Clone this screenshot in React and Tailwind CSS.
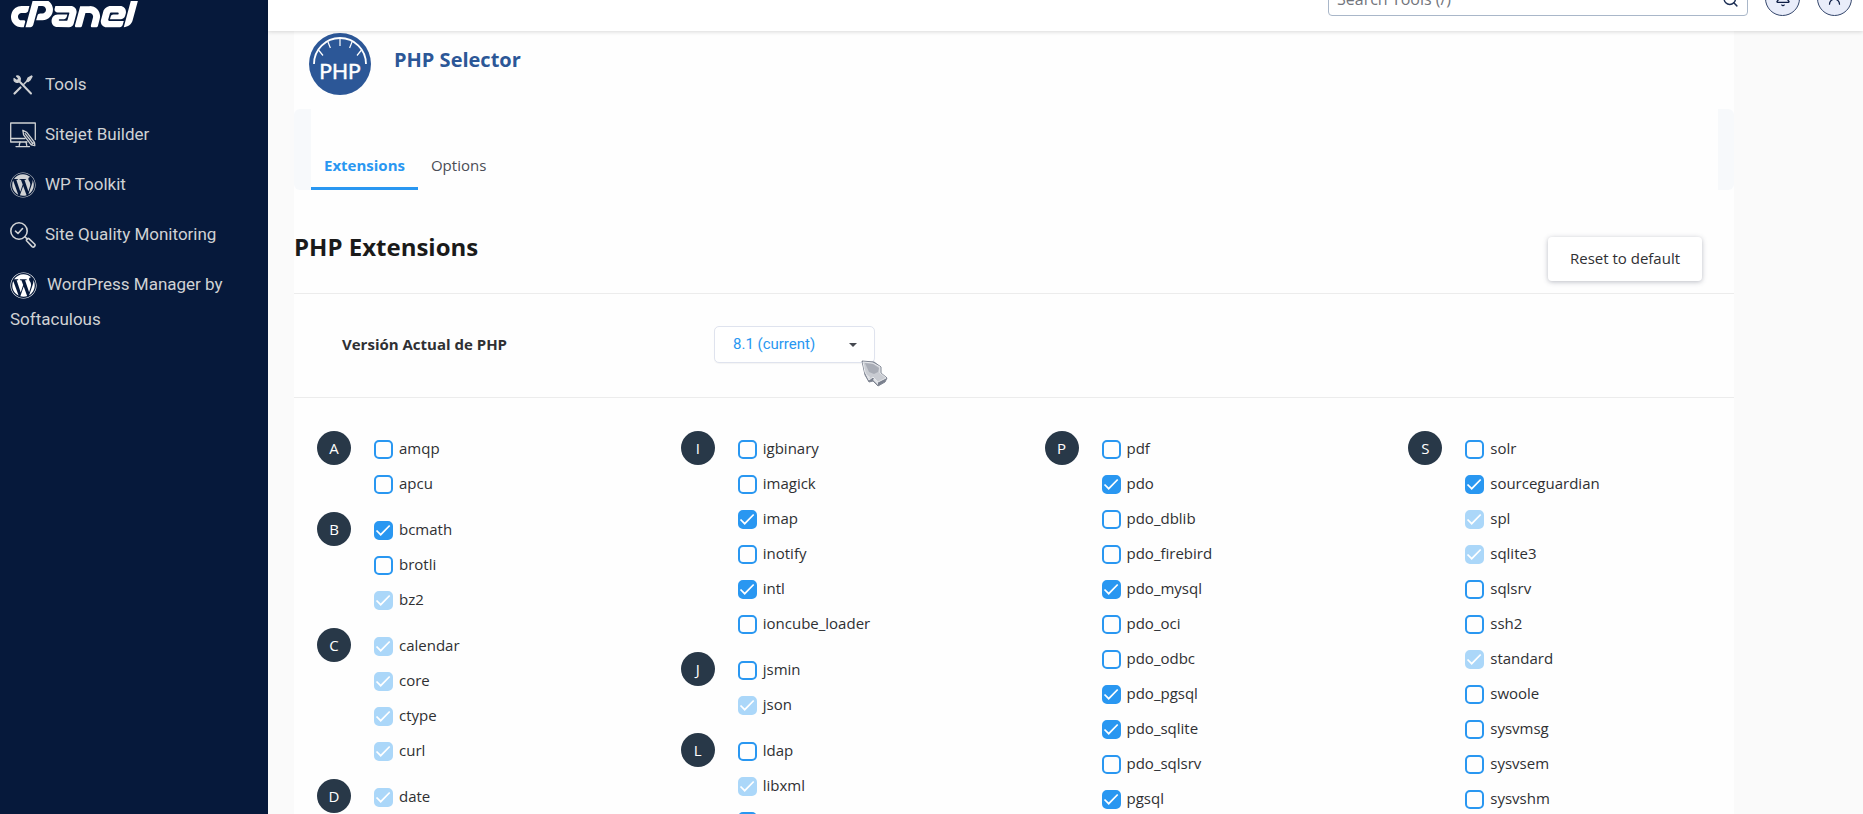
import { useState } from 'react';
import { FaCpanel, FaWordpress } from 'react-icons/fa';
import { Bell, Search, UserRound } from 'lucide-react';

// [name, state] - state is 'off', 'on' or 'locked' (built in, can't be turned off)
const COLUMNS = [
    [
        { letter: 'A', items: [['amqp', 'off'], ['apcu', 'off']] },
        { letter: 'B', items: [['bcmath', 'on'], ['brotli', 'off'], ['bz2', 'locked']] },
        { letter: 'C', items: [['calendar', 'locked'], ['core', 'locked'], ['ctype', 'locked'], ['curl', 'locked']] },
        { letter: 'D', items: [['date', 'locked']] },
    ],
    [
        { letter: 'I', items: [['igbinary', 'off'], ['imagick', 'off'], ['imap', 'on'], ['inotify', 'off'], ['intl', 'on'], ['ioncube_loader', 'off']] },
        { letter: 'J', items: [['jsmin', 'off'], ['json', 'locked']] },
        { letter: 'L', items: [['ldap', 'off'], ['libxml', 'locked'], ['lzf', 'off']] },
    ],
    [
        {
            letter: 'P',
            items: [
                ['pdf', 'off'], ['pdo', 'on'], ['pdo_dblib', 'off'], ['pdo_firebird', 'off'], ['pdo_mysql', 'on'], ['pdo_oci', 'off'],
                ['pdo_odbc', 'off'], ['pdo_pgsql', 'on'], ['pdo_sqlite', 'on'], ['pdo_sqlsrv', 'off'], ['pgsql', 'on'],
            ],
        },
    ],
    [
        {
            letter: 'S',
            items: [
                ['solr', 'off'], ['sourceguardian', 'on'], ['spl', 'locked'], ['sqlite3', 'locked'], ['sqlsrv', 'off'], ['ssh2', 'off'],
                ['standard', 'locked'], ['swoole', 'off'], ['sysvmsg', 'off'], ['sysvsem', 'off'], ['sysvshm', 'off'],
            ],
        },
    ],
];

const ToolsIcon = () => (
    <svg viewBox="0 0 26 26" className="w-[26px] h-[26px]" fill="none" stroke="currentColor" strokeLinecap="round" strokeLinejoin="round">
        <path d="M9.5 9.5 21 21.5" strokeWidth="2" />
        <path d="M4 6.5c-.4 2.500 1.500 4.500 4.400 3.700l1.800-1.800C11 5.500 9 3.600 6.500 4l2 2.200-.4 1.600-1.700.5z" strokeWidth="1.2" fill="currentColor" />
        <path d="M4.500 21.500 10.500 15.500" strokeWidth="2.200" />
        <path d="M13.800 12.200 17.500 8.500" strokeWidth="1.500" />
        <path d="M17 8.500 18 6.200 21.500 4 22 4.500 20 8 18 9.500z" strokeWidth="1.400" fill="currentColor" />
    </svg>
);

const SitejetIcon = () => (
    <svg viewBox="0 0 26 26" className="w-[26px] h-[26px]" fill="none" stroke="currentColor" strokeWidth="1.300" strokeLinejoin="round" strokeLinecap="round">
        <path d="M17 20H.7V1h24.600v16.500M.7 16.500H15" />
        <path d="M10 20l-.8 3.500M16 20l.8 3.500M6 24.600h13.500" />
        <path d="M12.800 8.200l.8 4.600 7.600 10 3.300-2.500-7.700-9.900zM21.200 22.800l3.600.8-.3-3.300M15.200 11.600l7.600 9.900" />
    </svg>
);

const QualityIcon = () => (
    <svg viewBox="0 0 26 26" className="w-[26px] h-[26px]" fill="none" stroke="currentColor" strokeWidth="1.600" strokeLinejoin="round" strokeLinecap="round">
        <circle cx="9" cy="9" r="8.200" />
        <path d="M5.500 9.200l2.500 2.300 4.500-5M15 14.800l2.300 2.200" />
        <path d="M16.600 18.800c-.7-1 1.200-2.900 2.300-2.200l5.700 5.400c1.400 1.500-.9 4-2.500 2.600z" />
    </svg>
);

const PhpLogo = () => (
    <svg viewBox="0 0 62 62" className="w-[62px] h-[62px]">
        <circle cx="31" cy="31" r="31" fill="#2c5797" />
        <path d="M5 31a26 26 0 0 1 52 0" fill="none" stroke="#fff" strokeWidth="1.800" />
        <path d="M31 6v7M19 9l2.400 6M43 9l-2.400 6M9.500 17l4.500 5.500M52.500 17 48 22.500" stroke="#fff" strokeWidth="1.200" />
        <text x="31" y="46" textAnchor="middle" fill="#fff" stroke="#fff" strokeWidth="0.400" fontSize="21" fontFamily="Lato, sans-serif">PHP</text>
    </svg>
);

const Pointer = () => (
    <svg viewBox="0 0 27 27" className="absolute left-[147px] top-[34px] w-[27px] h-[27px] pointer-events-none">
        <path d="M1 1 13 2 20 7 20 13 26 18 24 22 17 26 12 21 8 22 4 15z" fill="#7b818e" stroke="#7f8592" strokeLinejoin="round" />
        <path d="M2 2 12 3 19 7 19 13 25 18 17 22 12 17 8 20 4 12z" fill="#c9ccd2" stroke="#e9ebee" strokeLinejoin="round" />
        <path d="M4 3 12 4 18 8 17 12 13 14 8 12z" fill="#a9adb6" />
        <path d="M5 14 8 20 9 17zM13 18 17 22 17 25 12 20z" fill="#e1e3e7" />
    </svg>
);

const NAV = [
    { label: 'Tools', icon: <ToolsIcon /> },
    { label: 'Sitejet Builder', icon: <SitejetIcon /> },
    { label: 'WP Toolkit', icon: <FaWordpress size={26} /> },
    { label: 'Site Quality Monitoring', icon: <QualityIcon /> },
];

const Extension = ({ name, state }) => {
    const [checked, setChecked] = useState(state !== 'off');

    return (
        <li>
            <label className="flex items-center gap-1.5 h-[35px] w-fit">
                <span className="grid">
                    <input
                        type="checkbox"
                        checked={checked}
                        disabled={state === 'locked'}
                        onChange={(e) => setChecked(e.target.checked)}
                        className="peer [grid-area:1/1] appearance-none w-[19px] h-[19px] rounded-[5px] border-2 border-[#2997f1] checked:bg-[#2997f1] disabled:border-[#abd7f9] disabled:bg-[#abd7f9]"
                    />
                    <svg viewBox="0 0 19 19" className="[grid-area:1/1] w-[19px] h-[19px] pointer-events-none invisible peer-checked:visible" fill="none" stroke="#fff" strokeWidth="1.700">
                        <path d="M2.500 9.500l4.200 4.200 9-9.200" />
                    </svg>
                </span>
                <span className="text-[15px] leading-5 pb-1">{name}</span>
            </label>
        </li>
    );
};

const App = () => {
    const [version, setVersion] = useState('8.1');

    return (
        <div className="flex h-screen overflow-hidden bg-[#fafafa] font-['Open_Sans',sans-serif] text-[#2f3033]">
            {/* Sidebar */}
            <aside className="w-[268px] shrink-0 bg-[#06193b] text-[#d0d2d4] font-['Roboto',sans-serif]">
                <a href="#home" aria-label="cPanel" className="block pl-[11px] pt-px text-white">
                    <FaCpanel viewBox="0 188 640 136" className="w-[127px] h-[27px]" />
                </a>
                <nav className="flex flex-col gap-[15px] pt-[39px] pl-2.5 text-[17px] leading-[35px]">
                    {NAV.map((item) => (
                        <a key={item.label} href="#nav" className="flex items-center gap-[9px]">
                            {item.icon}
                            <span>{item.label}</span>
                        </a>
                    ))}
                    <a href="#wordpress" className="pr-8">
                        <FaWordpress size={27} className="inline text-white mr-2.5" />
                        WordPress Manager by Softaculous
                    </a>
                </nav>
            </aside>

            <div className="flex-1 min-w-0 flex flex-col">
                {/* Top bar, scrolled partly out of view */}
                <header className="relative h-[31px] shrink-0 flex items-end justify-end gap-[17px] pb-[15px] pr-[11px] bg-white shadow-[0_1px_4px_rgba(0,0,0,0.15)]">
                    <div className="flex items-center w-[420px] h-9 shrink-0 px-2 pt-0.5 border border-[#a9b7c9] rounded bg-white">
                        <input
                            type="text"
                            aria-label="Search Tools"
                            placeholder="Search Tools (/)"
                            className="flex-1 min-w-0 outline-none text-base placeholder:text-[#72757c]"
                        />
                        <Search size={17} className="text-[#1d2f55]" />
                    </div>
                    <button type="button" aria-label="Notifications" className="grid place-items-center w-[35px] h-[35px] shrink-0 rounded-full border border-[#33456a] bg-[#e9edfa] text-[#0c1c44]">
                        <Bell size={16} />
                    </button>
                    <button type="button" aria-label="Account" className="grid place-items-center w-[35px] h-[35px] shrink-0 rounded-full border border-[#33456a] bg-[#e9edfa] text-[#0c1c44]">
                        <UserRound size={15} />
                    </button>
                </header>

                <main className="ml-[26px] max-w-[1440px] flex-1 min-h-0 bg-[#fefefe]">
                    <div className="flex items-center gap-[23px] pt-0.5 pl-[15px]">
                        <PhpLogo />
                        <h1 className="text-xl font-bold text-[#2c5797] pb-2">PHP Selector</h1>
                    </div>

                    <div className="mt-3.5 pl-[17px] pr-4 bg-[#f7f9fb] rounded-md">
                        <div className="flex items-end h-[81px] bg-[#fefefe] text-[15px]">
                            <button type="button" className="h-[41px] px-[13px] pb-1.5 border-b-3 border-[#2997f1] font-bold text-[#2997f1]">Extensions</button>
                            <button type="button" className="h-[41px] px-[13px] pb-1.5 border-b-3 border-transparent text-[#4a4d55]">Options</button>
                        </div>
                    </div>

                    <div className="flex items-start justify-between pt-[45px] pb-3 pr-8 border-b border-[#ececec]">
                        <h2 className="text-2xl leading-6 font-bold text-[#1a1a1a]">PHP Extensions</h2>
                        <button type="button" className="mt-0.5 h-11 w-[154px] pb-0.5 rounded bg-white text-[15px] shadow-[0_1px_5px_rgba(60,66,90,0.35)]">
                            Reset to default
                        </button>
                    </div>

                    <div className="flex items-center h-[104px] pl-12 pb-0.5 border-b border-[#ececec]">
                        <label htmlFor="version" className="w-[372px] text-[15px] font-bold">Versión Actual de PHP</label>
                        <div className="relative grid items-center">
                            <select
                                id="version"
                                value={version}
                                onChange={(e) => setVersion(e.target.value)}
                                className="[grid-area:1/1] appearance-none w-[161px] h-[37px] pl-[18px] border border-[#dfe3ee] rounded-[5px] bg-white font-['Roboto',sans-serif] text-[15px] text-[#2997f1] shadow-[0_1px_1px_rgba(0,0,0,0.04)]"
                            >
                                <option value="8.1">8.1 (current)</option>
                                <option value="8.2">8.2</option>
                            </select>
                            <svg viewBox="0 0 8 4" className="[grid-area:1/1] justify-self-end mr-[18px] w-2 h-1 pointer-events-none">
                                <path d="M0 0h8L4 4z" fill="#454850" />
                            </svg>
                            <Pointer />
                        </div>
                    </div>

                    {/* Extension lists */}
                    <div className="grid grid-cols-4 gap-x-10 pt-[33px] pl-[23px] pr-0.5">
                        {COLUMNS.map((groups, idx) => (
                            <div key={idx} className="flex flex-col gap-2.5">
                                {groups.map((group) => (
                                    <section key={group.letter} className="flex gap-[23px]">
                                        <h3 className="grid place-items-center w-[34px] h-[34px] rounded-full bg-[#283848] text-white text-[15px]">{group.letter}</h3>
                                        <ul className="pt-px">
                                            {group.items.map(([name, state]) => (
                                                <Extension key={name} name={name} state={state} />
                                            ))}
                                        </ul>
                                    </section>
                                ))}
                            </div>
                        ))}
                    </div>
                </main>
            </div>
        </div>
    );
};

export default App;
